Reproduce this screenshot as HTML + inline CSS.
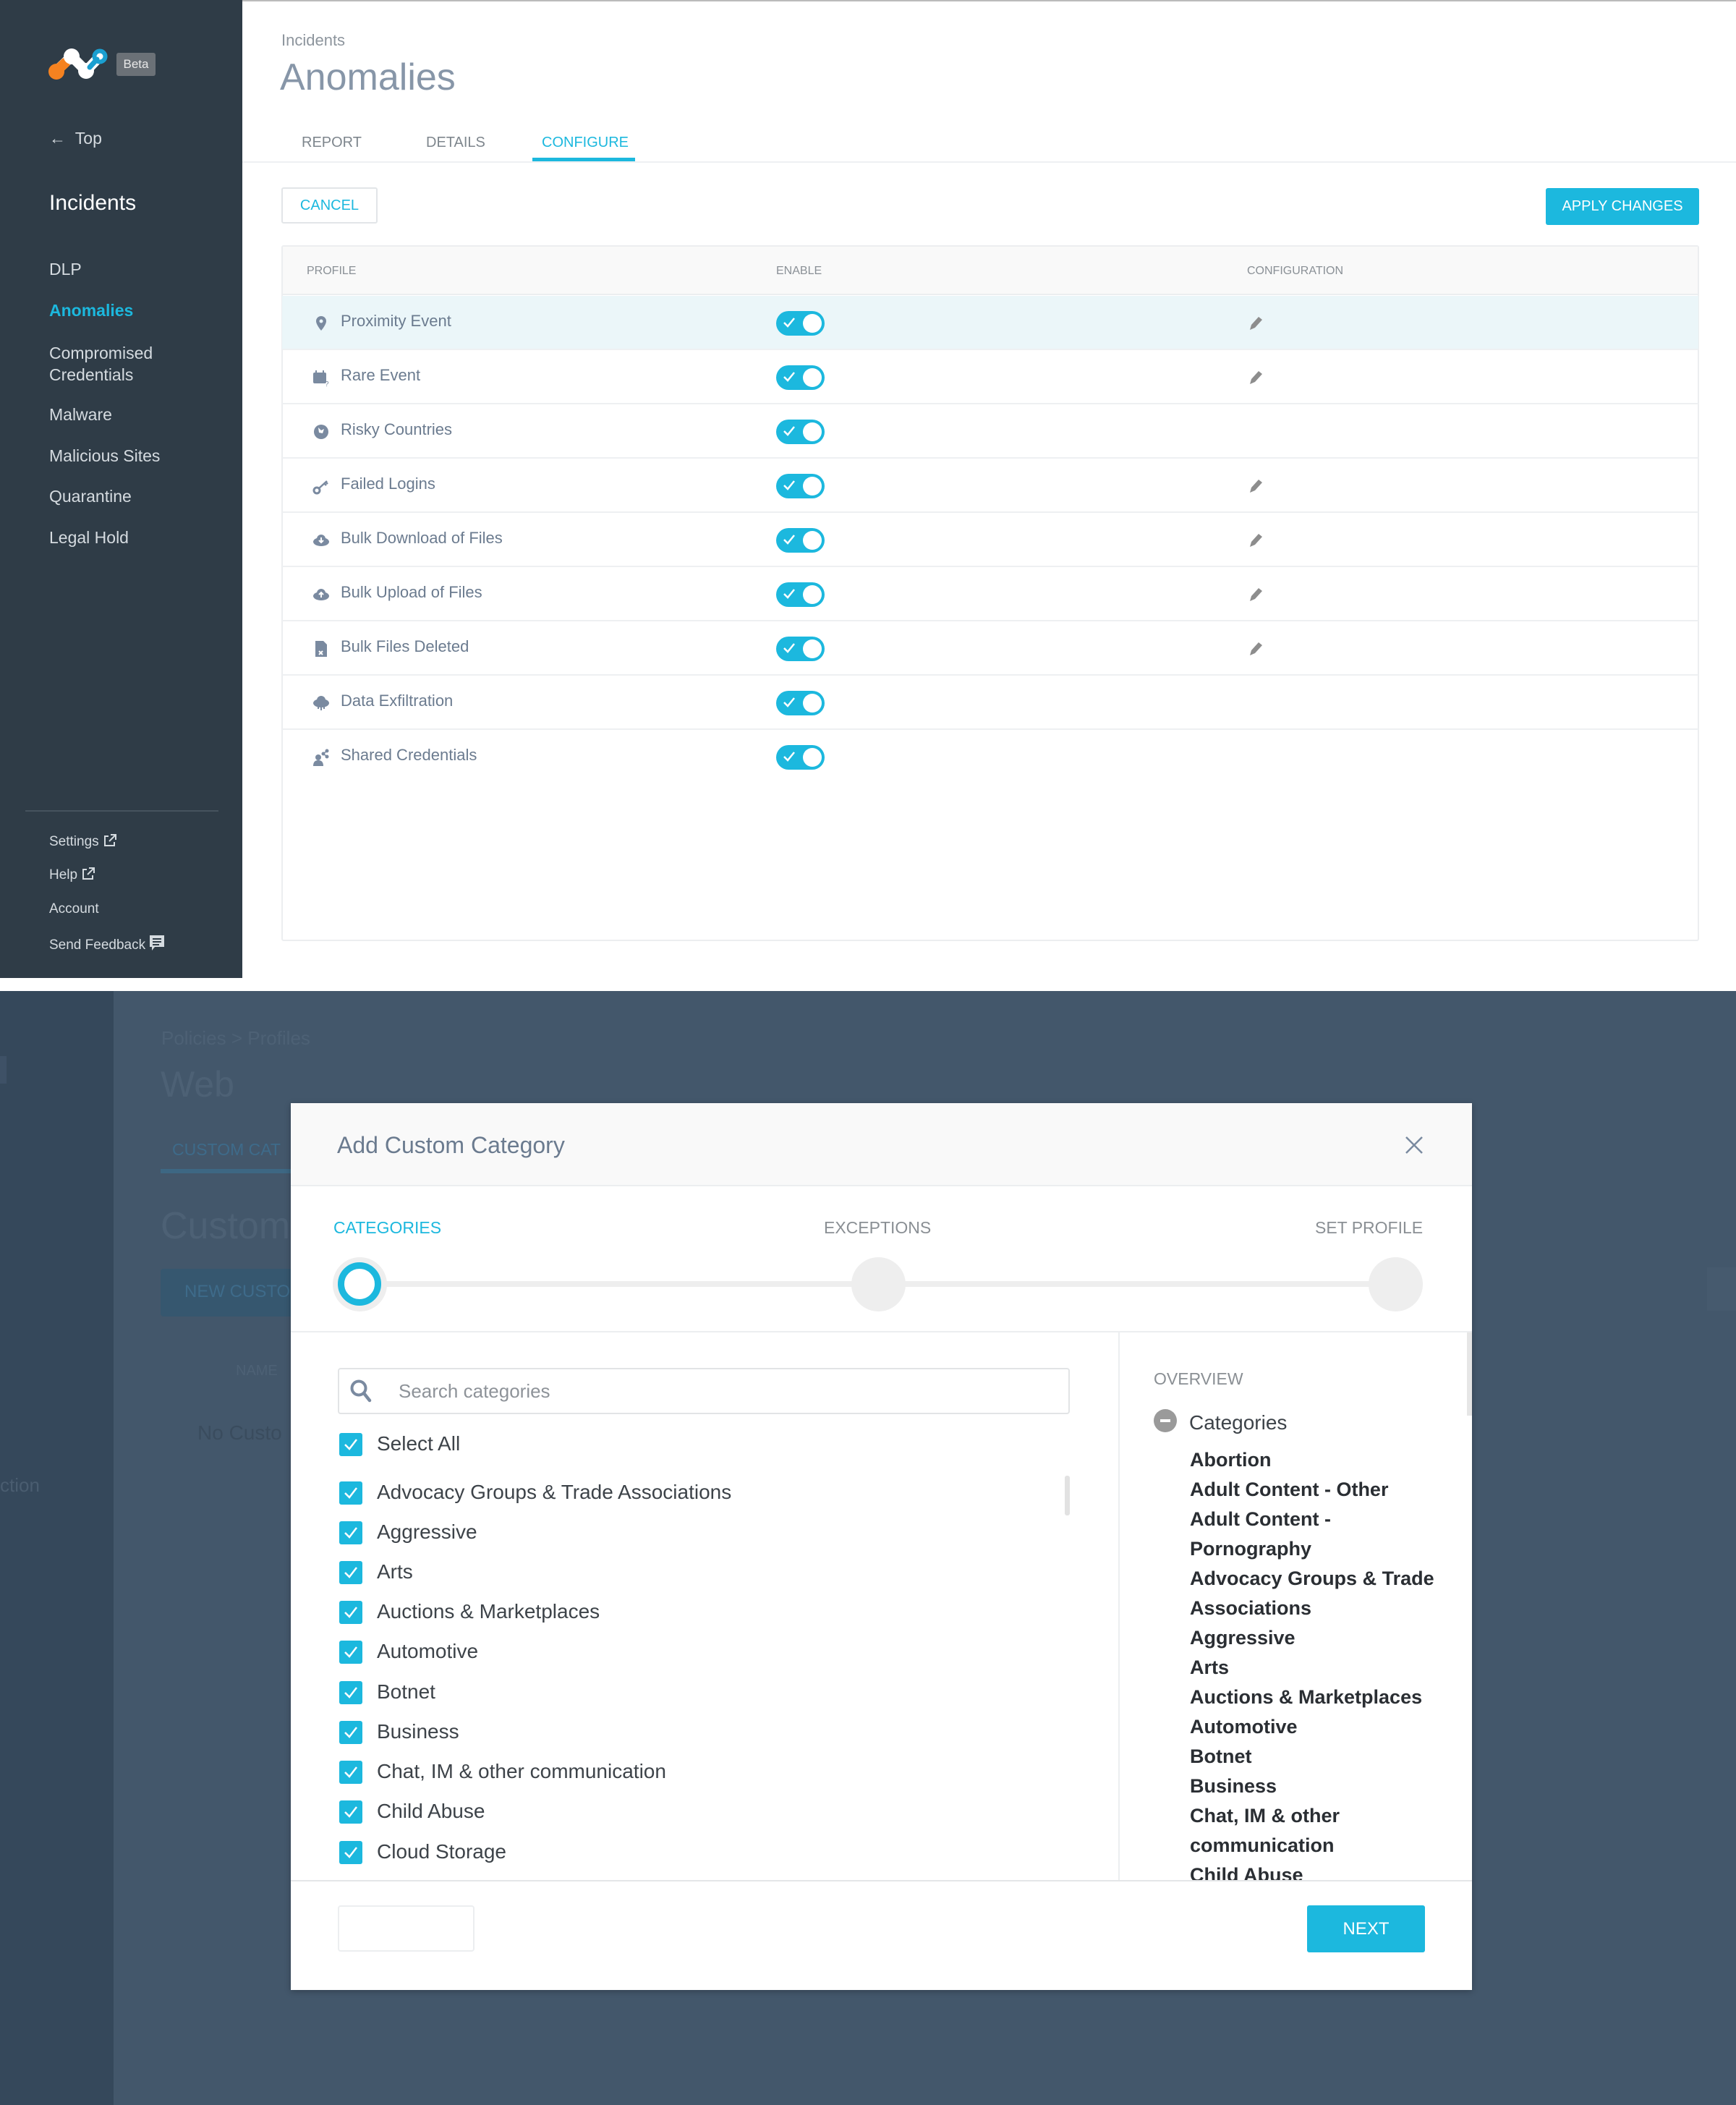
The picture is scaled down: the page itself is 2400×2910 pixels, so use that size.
<!DOCTYPE html>
<html><head><meta charset="utf-8"><style>
*{margin:0;padding:0;box-sizing:border-box}
body{width:2400px;height:2910px;position:relative;overflow:hidden;background:#fff;font-family:"Liberation Sans",sans-serif}
.a{position:absolute;white-space:nowrap}
.sb{position:absolute;left:0;top:0;width:335px;height:1352px;background:#2f3c47}
.nav{color:#d5dbe0;font-size:23px;left:68px}
.foot{color:#d5dbe0;font-size:19px;left:68px}
.row{position:absolute;left:390px;width:1958px;height:75px;border-bottom:2px solid #eef0f2}
.row .t{position:absolute;left:81px;top:22px;font-size:22px;color:#6b7b8f}
.row .ic{position:absolute;left:42px;top:26px;width:24px;height:24px}
.tg{position:absolute;left:683px;top:21px;width:67px;height:34px;border-radius:17px;background:#1cb8de}
.tg:after{content:"";position:absolute;right:4px;top:4px;width:26px;height:26px;border-radius:50%;background:#fff}
.tg svg{position:absolute;left:10px;top:9px}
.pen{position:absolute;left:1335px;top:27px}
.cb{position:absolute;left:469px;width:32px;height:32px;border-radius:3px;background:#1cb8de}
.cb svg{position:absolute;left:7px;top:8px}
.ci{position:absolute;left:521px;font-size:28px;color:#3d4349}
.ov{position:absolute;left:1645px;font-size:27px;font-weight:bold;color:#2a2e33;line-height:41px}
</style></head><body>
<div style="position:absolute;left:0;top:0;width:2400px;height:2px;background:#bbb"></div>
<div class="sb"></div>
<svg class="a" style="left:60px;top:60px" width="100" height="60">
<path d="M18 38 L39 18 M39 18 L59 38 M59 38 L78 18" stroke="#fff" stroke-width="14" stroke-linecap="round" fill="none"/>
<path d="M18 38 L30 27" stroke="#f58220" stroke-width="14" stroke-linecap="round"/>
<circle cx="18" cy="39" r="11" fill="#f58220"/>
<circle cx="39" cy="18" r="11" fill="#fff"/><circle cx="59" cy="38" r="11" fill="#fff"/>
<path d="M64 33 L74 22" stroke="#1a9fd0" stroke-width="7" stroke-linecap="round"/>
<circle cx="78" cy="18" r="7.5" fill="none" stroke="#1a9fd0" stroke-width="6"/>
</svg>
<div class="a" style="left:161px;top:73px;width:54px;height:32px;background:#6b7177;border-radius:3px;color:#e8e8e8;font-size:17px;text-align:center;line-height:32px">Beta</div>
<div class="a nav" style="top:178px">←&nbsp;&nbsp;Top</div>
<div class="a" style="left:68px;top:264px;color:#fff;font-size:30px">Incidents</div>
<div class="a nav" style="top:359px">DLP</div>
<div class="a nav" style="top:416px;color:#1cb8de;font-weight:bold">Anomalies</div>
<div class="a nav" style="top:473px;line-height:30px">Compromised<br>Credentials</div>
<div class="a nav" style="top:560px">Malware</div>
<div class="a nav" style="top:617px">Malicious Sites</div>
<div class="a nav" style="top:673px">Quarantine</div>
<div class="a nav" style="top:730px">Legal Hold</div>
<div class="a" style="left:35px;top:1120px;width:267px;height:2px;background:#46535e"></div>
<div class="a foot" style="top:1152px">Settings <svg width="20" height="20" style="vertical-align:-3px"><path d="M8 4 H3 V17 H16 V12" stroke="#d5dbe0" stroke-width="2" fill="none"/><path d="M9 11 L17 3 M11 2 H18 V9" stroke="#d5dbe0" stroke-width="2" fill="none"/></svg></div>
<div class="a foot" style="top:1198px">Help <svg width="20" height="20" style="vertical-align:-3px"><path d="M8 4 H3 V17 H16 V12" stroke="#d5dbe0" stroke-width="2" fill="none"/><path d="M9 11 L17 3 M11 2 H18 V9" stroke="#d5dbe0" stroke-width="2" fill="none"/></svg></div>
<div class="a foot" style="top:1246px">Account</div>
<div class="a foot" style="top:1292px">Send Feedback <svg width="22" height="24" style="vertical-align:-4px"><path d="M1 1 H21 V17 H8 L4 22 V17 H1 Z" fill="#d5dbe0"/><path d="M5 6 H17 M5 10 H17 M5 14 H14" stroke="#2f3c47" stroke-width="2"/></svg></div>

<div class="a" style="left:389px;top:43px;font-size:22px;color:#8d959d">Incidents</div>
<div class="a" style="left:387px;top:77px;font-size:52px;color:#8796a8">Anomalies</div>
<div class="a" style="left:417px;top:186px;font-size:20px;color:#7e868d">REPORT</div>
<div class="a" style="left:589px;top:186px;font-size:20px;color:#7e868d">DETAILS</div>
<div class="a" style="left:749px;top:186px;font-size:20px;color:#1cb8de">CONFIGURE</div>
<div class="a" style="left:335px;top:223px;width:2065px;height:2px;background:#eef0f2"></div>
<div class="a" style="left:736px;top:218px;width:142px;height:5px;background:#1cb8de"></div>
<div class="a" style="left:389px;top:259px;width:133px;height:50px;border:2px solid #e2e5e8;border-radius:3px;color:#1cb8de;font-size:20px;text-align:center;line-height:46px">CANCEL</div>
<div class="a" style="left:2137px;top:260px;width:212px;height:51px;background:#1cb8de;border-radius:3px;color:#fff;font-size:20px;text-align:center;line-height:51px">APPLY CHANGES</div>

<div class="a" style="left:389px;top:339px;width:1960px;height:962px;border:2px solid #eceef0;border-radius:3px"></div>
<div class="a" style="left:391px;top:341px;width:1956px;height:67px;background:#f9f9f9;border-bottom:2px solid #eceef0"></div>
<div class="a" style="left:424px;top:366px;font-size:16px;color:#8a9096">PROFILE</div>
<div class="a" style="left:1073px;top:366px;font-size:16px;color:#8a9096">ENABLE</div>
<div class="a" style="left:1724px;top:366px;font-size:16px;color:#8a9096">CONFIGURATION</div>

<div class="row" style="top:409px;background:#ebf6f9"><svg class="ic" viewBox="0 0 24 24"><path d="M12 2a7 7 0 0 0-7 7c0 5 7 13 7 13s7-8 7-13a7 7 0 0 0-7-7z" fill="#7a8aa0"/><circle cx="12" cy="9" r="2.5" fill="#ebf6f9"/></svg><div class="t">Proximity Event</div><div class="tg"><svg width="16" height="14"><path d="M1 7 L6 12 L15 1" stroke="#fff" stroke-width="2.5" fill="none"/></svg></div><svg class="pen" width="22" height="22"><path d="M3 20 L5 13 L15 2 L20 6 L10 17 Z" fill="#8d8d8d"/></svg></div>
<div class="row" style="top:484px"><svg class="ic" viewBox="0 0 24 24"><rect x="1" y="5" width="18" height="15" rx="2" fill="#7a8aa0"/><rect x="4" y="2" width="2" height="5" fill="#7a8aa0"/><rect x="14" y="2" width="2" height="5" fill="#7a8aa0"/><text x="17" y="24" font-size="10" fill="#7a8aa0" font-family="Liberation Sans">?</text></svg><div class="t">Rare Event</div><div class="tg"><svg width="16" height="14"><path d="M1 7 L6 12 L15 1" stroke="#fff" stroke-width="2.5" fill="none"/></svg></div><svg class="pen" width="22" height="22"><path d="M3 20 L5 13 L15 2 L20 6 L10 17 Z" fill="#8d8d8d"/></svg></div>
<div class="row" style="top:559px"><svg class="ic" viewBox="0 0 24 24"><circle cx="12" cy="12" r="10" fill="#7a8aa0"/><path d="M8 6 L12 10 L16 8 L14 14 L9 13 Z" fill="#fff"/></svg><div class="t">Risky Countries</div><div class="tg"><svg width="16" height="14"><path d="M1 7 L6 12 L15 1" stroke="#fff" stroke-width="2.5" fill="none"/></svg></div></div>
<div class="row" style="top:634px"><svg class="ic" viewBox="0 0 24 24"><circle cx="6" cy="18" r="4" fill="none" stroke="#7a8aa0" stroke-width="3"/><path d="M9 15 L20 5 M16 8 L19 11 M18 6 L21 9" stroke="#7a8aa0" stroke-width="2.5"/></svg><div class="t">Failed Logins</div><div class="tg"><svg width="16" height="14"><path d="M1 7 L6 12 L15 1" stroke="#fff" stroke-width="2.5" fill="none"/></svg></div><svg class="pen" width="22" height="22"><path d="M3 20 L5 13 L15 2 L20 6 L10 17 Z" fill="#8d8d8d"/></svg></div>
<div class="row" style="top:709px"><svg class="ic" viewBox="0 0 24 24"><ellipse cx="12" cy="14" rx="11" ry="6" fill="#7a8aa0"/><circle cx="12" cy="10" r="6" fill="#7a8aa0"/><path d="M12 8 V15 M9 12 L12 15 L15 12" stroke="#fff" stroke-width="2" fill="none"/></svg><div class="t">Bulk Download of Files</div><div class="tg"><svg width="16" height="14"><path d="M1 7 L6 12 L15 1" stroke="#fff" stroke-width="2.5" fill="none"/></svg></div><svg class="pen" width="22" height="22"><path d="M3 20 L5 13 L15 2 L20 6 L10 17 Z" fill="#8d8d8d"/></svg></div>
<div class="row" style="top:784px"><svg class="ic" viewBox="0 0 24 24"><ellipse cx="12" cy="14" rx="11" ry="6" fill="#7a8aa0"/><circle cx="12" cy="10" r="6" fill="#7a8aa0"/><path d="M12 16 V9 M9 12 L12 9 L15 12" stroke="#fff" stroke-width="2" fill="none"/></svg><div class="t">Bulk Upload of Files</div><div class="tg"><svg width="16" height="14"><path d="M1 7 L6 12 L15 1" stroke="#fff" stroke-width="2.5" fill="none"/></svg></div><svg class="pen" width="22" height="22"><path d="M3 20 L5 13 L15 2 L20 6 L10 17 Z" fill="#8d8d8d"/></svg></div>
<div class="row" style="top:859px"><svg class="ic" viewBox="0 0 24 24"><path d="M4 1 H15 L20 6 V23 H4 Z" fill="#7a8aa0"/><path d="M9 15 L14 20 M14 15 L9 20" stroke="#fff" stroke-width="2"/></svg><div class="t">Bulk Files Deleted</div><div class="tg"><svg width="16" height="14"><path d="M1 7 L6 12 L15 1" stroke="#fff" stroke-width="2.5" fill="none"/></svg></div><svg class="pen" width="22" height="22"><path d="M3 20 L5 13 L15 2 L20 6 L10 17 Z" fill="#8d8d8d"/></svg></div>
<div class="row" style="top:934px"><svg class="ic" viewBox="0 0 24 24"><ellipse cx="12" cy="12" rx="11" ry="6" fill="#7a8aa0"/><circle cx="12" cy="8" r="6" fill="#7a8aa0"/><path d="M12 16 V22 M8 16 V20 M16 16 V20" stroke="#7a8aa0" stroke-width="2"/></svg><div class="t">Data Exfiltration</div><div class="tg"><svg width="16" height="14"><path d="M1 7 L6 12 L15 1" stroke="#fff" stroke-width="2.5" fill="none"/></svg></div></div>
<div class="row" style="top:1009px;border-bottom:none"><svg class="ic" viewBox="0 0 24 24"><circle cx="8" cy="12" r="4" fill="#7a8aa0"/><path d="M1 24 Q1 16 8 16 Q15 16 15 24 Z" fill="#7a8aa0"/><circle cx="20" cy="3" r="2.5" fill="#7a8aa0"/><circle cx="20" cy="11" r="2.5" fill="#7a8aa0"/><circle cx="15" cy="7" r="2.5" fill="#7a8aa0"/><path d="M15 7 L20 3 M15 7 L20 11" stroke="#7a8aa0" stroke-width="1.5"/></svg><div class="t">Shared Credentials</div><div class="tg"><svg width="16" height="14"><path d="M1 7 L6 12 L15 1" stroke="#fff" stroke-width="2.5" fill="none"/></svg></div></div>

<div class="a" style="left:0;top:1370px;width:2400px;height:1540px;background:#43576b"></div>
<div class="a" style="left:0;top:1370px;width:157px;height:1540px;background:#35485b"></div>
<div class="a" style="left:0;top:1460px;width:9px;height:38px;background:#3e5166"></div>
<div class="a" style="left:0;top:2038px;font-size:26px;color:#4a5d70">ction</div>
<div class="a" style="left:223px;top:1420px;font-size:26px;color:#4d6175">Policies &gt; Profiles</div>
<div class="a" style="left:222px;top:1470px;font-size:50px;color:#4d6175;font-weight:300">Web</div>
<div class="a" style="left:238px;top:1576px;font-size:23px;color:#3e6b8a">CUSTOM CAT</div>
<div class="a" style="left:222px;top:1616px;width:190px;height:6px;background:#3d6783"></div>
<div class="a" style="left:222px;top:1665px;font-size:52px;color:#4d6175;font-weight:300">Custom</div>
<div class="a" style="left:222px;top:1754px;width:190px;height:66px;background:#36576f;border-radius:4px"></div>
<div class="a" style="left:255px;top:1772px;font-size:24px;color:#3e6b8a">NEW CUSTO</div>
<div class="a" style="left:326px;top:1884px;font-size:20px;color:#4d6175">NAME</div>
<div class="a" style="left:273px;top:1965px;font-size:28px;color:#3a4c5e">No Custo</div>
<div class="a" style="left:2360px;top:1752px;width:40px;height:60px;background:#465a6e"></div>

<div class="a" style="left:402px;top:1525px;width:1633px;height:1226px;background:#fff;box-shadow:0 2px 8px rgba(0,0,0,.25)"></div>
<div class="a" style="left:402px;top:1525px;width:1633px;height:115px;background:#f9f9f9;border-bottom:2px solid #eceef0"></div>
<div class="a" style="left:466px;top:1565px;font-size:32px;color:#6b7b8f">Add Custom Category</div>
<svg class="a" style="left:1942px;top:1570px" width="26" height="26"><path d="M2 2 L24 24 M24 2 L2 24" stroke="#7a8aa0" stroke-width="2.5"/></svg>
<div class="a" style="left:461px;top:1684px;font-size:23px;color:#1cb8de">CATEGORIES</div>
<div class="a" style="left:1139px;top:1684px;font-size:23px;color:#8a8f94">EXCEPTIONS</div>
<div class="a" style="left:1818px;top:1684px;font-size:23px;color:#8a8f94">SET PROFILE</div>
<div class="a" style="left:496px;top:1771px;width:1434px;height:8px;background:#eeeeee"></div>
<div class="a" style="left:460px;top:1738px;width:75px;height:75px;border-radius:50%;background:#eeeeee"></div>
<div class="a" style="left:467px;top:1745px;width:60px;height:60px;border-radius:50%;border:9px solid #1cb8de;background:#fff"></div>
<div class="a" style="left:1177px;top:1738px;width:75px;height:75px;border-radius:50%;background:#eeeeee"></div>
<div class="a" style="left:1892px;top:1738px;width:75px;height:75px;border-radius:50%;background:#eeeeee"></div>
<div class="a" style="left:402px;top:1840px;width:1633px;height:2px;background:#eceef0"></div>
<div class="a" style="left:1546px;top:1842px;width:2px;height:758px;background:#eceef0"></div>
<div class="a" style="left:2028px;top:1842px;width:7px;height:115px;background:#e6e6e6"></div>

<div class="a" style="left:467px;top:1891px;width:1012px;height:64px;border:2px solid #e2e4e6;border-radius:4px"></div>
<svg class="a" style="left:483px;top:1906px" width="32" height="34"><circle cx="13" cy="13" r="9.5" fill="none" stroke="#7a8aa0" stroke-width="4"/><path d="M20 20 L28 30" stroke="#7a8aa0" stroke-width="4.5" stroke-linecap="round"/></svg>
<div class="a" style="left:551px;top:1908px;font-size:26px;color:#8e9399">Search categories</div>
<div class="cb" style="top:1981px"><svg width="18" height="16"><path d="M1 8 L7 14 L17 1" stroke="#fff" stroke-width="2.5" fill="none"/></svg></div>
<div class="ci" style="top:1980px">Select All</div>
<div class="a" style="left:1472px;top:2040px;width:7px;height:55px;background:#e2e2e2;border-radius:3px"></div>

<div class="cb" style="top:2048px"><svg width="18" height="16"><path d="M1 8 L7 14 L17 1" stroke="#fff" stroke-width="2.5" fill="none"/></svg></div><div class="ci" style="top:2047px">Advocacy Groups &amp; Trade Associations</div>
<div class="cb" style="top:2103px"><svg width="18" height="16"><path d="M1 8 L7 14 L17 1" stroke="#fff" stroke-width="2.5" fill="none"/></svg></div><div class="ci" style="top:2102px">Aggressive</div>
<div class="cb" style="top:2158px"><svg width="18" height="16"><path d="M1 8 L7 14 L17 1" stroke="#fff" stroke-width="2.5" fill="none"/></svg></div><div class="ci" style="top:2157px">Arts</div>
<div class="cb" style="top:2213px"><svg width="18" height="16"><path d="M1 8 L7 14 L17 1" stroke="#fff" stroke-width="2.5" fill="none"/></svg></div><div class="ci" style="top:2212px">Auctions &amp; Marketplaces</div>
<div class="cb" style="top:2268px"><svg width="18" height="16"><path d="M1 8 L7 14 L17 1" stroke="#fff" stroke-width="2.5" fill="none"/></svg></div><div class="ci" style="top:2267px">Automotive</div>
<div class="cb" style="top:2324px"><svg width="18" height="16"><path d="M1 8 L7 14 L17 1" stroke="#fff" stroke-width="2.5" fill="none"/></svg></div><div class="ci" style="top:2323px">Botnet</div>
<div class="cb" style="top:2379px"><svg width="18" height="16"><path d="M1 8 L7 14 L17 1" stroke="#fff" stroke-width="2.5" fill="none"/></svg></div><div class="ci" style="top:2378px">Business</div>
<div class="cb" style="top:2434px"><svg width="18" height="16"><path d="M1 8 L7 14 L17 1" stroke="#fff" stroke-width="2.5" fill="none"/></svg></div><div class="ci" style="top:2433px">Chat, IM &amp; other communication</div>
<div class="cb" style="top:2489px"><svg width="18" height="16"><path d="M1 8 L7 14 L17 1" stroke="#fff" stroke-width="2.5" fill="none"/></svg></div><div class="ci" style="top:2488px">Child Abuse</div>
<div class="cb" style="top:2545px"><svg width="18" height="16"><path d="M1 8 L7 14 L17 1" stroke="#fff" stroke-width="2.5" fill="none"/></svg></div><div class="ci" style="top:2544px">Cloud Storage</div>

<div class="a" style="left:1595px;top:1893px;font-size:23px;color:#8a8f94">OVERVIEW</div>
<div class="a" style="left:1595px;top:1948px;width:32px;height:32px;border-radius:50%;background:#9a9a9a"></div>
<div class="a" style="left:1604px;top:1962px;width:14px;height:4px;background:#fff"></div>
<div class="a" style="left:1644px;top:1951px;font-size:28px;color:#3d4349">Categories</div>
<div class="a" style="left:1548px;top:1998px;width:480px;height:602px;overflow:hidden">
<div class="ov" style="left:97px;top:0;white-space:normal;width:380px">Abortion<br>Adult Content - Other<br>Adult Content -<br>Pornography<br>Advocacy Groups &amp; Trade<br>Associations<br>Aggressive<br>Arts<br>Auctions &amp; Marketplaces<br>Automotive<br>Botnet<br>Business<br>Chat, IM &amp; other<br>communication<br>Child Abuse</div>
</div>

<div class="a" style="left:402px;top:2599px;width:1633px;height:2px;background:#e4e6e8"></div>
<div class="a" style="left:467px;top:2634px;width:189px;height:64px;border:2px solid #eceef0;border-radius:4px"></div>
<div class="a" style="left:1807px;top:2634px;width:163px;height:65px;background:#1cb8de;border-radius:3px;color:#fff;font-size:24px;text-align:center;line-height:65px">NEXT</div>
</body></html>
